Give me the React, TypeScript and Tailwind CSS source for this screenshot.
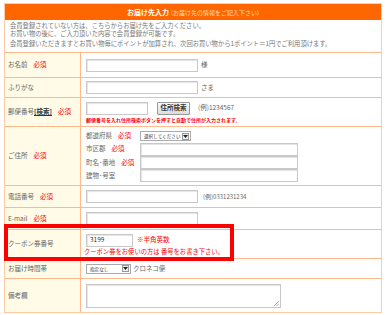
import React from 'react';

const font = { fontFamily: '"Noto Sans CJK JP", "Noto Sans", sans-serif' };

function Req() {
  return <span className="ml-[6px] text-[#ff0000]">必須</span>;
}

function Box({ w, value }: { w: string; value?: string }) {
  return (
    <div className={`${w} h-[13px] border border-[#c8c8c8] bg-white shadow-[inset_1px_1px_1px_#e4e4e4] flex items-center px-[3px] text-[6.5px] text-[#333]`}>
      {value}
    </div>
  );
}

function Select({ w, label }: { w: string; label: string }) {
  return (
    <div className={`${w} h-[10px] border border-[#aaa] bg-white flex items-center justify-between pl-[3px] pr-[1px] text-[4.6px] leading-[6px] text-[#333] whitespace-nowrap`}>
      <span>{label}</span>
      <span className="w-[7px] h-[7px] shrink-0 border border-[#999] bg-[#eee] flex items-center justify-center">
        <svg width="5" height="3" viewBox="0 0 5 3"><path d="M0 0h5L2.5 3z" fill="#222" /></svg>
      </span>
    </div>
  );
}

function Row({ h, label, children }: { h: string; label: React.ReactNode; children: React.ReactNode }) {
  return (
    <div className={`flex ${h} border-b border-[#ffb98a] last:border-b-0`}>
      <div className="w-[76px] shrink-0 bg-[#fffbe6] border-r border-[#ffb98a] flex items-center pl-[3px] text-[6.5px] text-[#666]">
        {label}
      </div>
      <div className="flex-1 pl-[5px] flex flex-col justify-center">{children}</div>
    </div>
  );
}

export default function App() {
  return (
    <div className="w-[387px] h-[315px] bg-white relative" style={font}>
      <div className="absolute left-[4px] top-[3px] w-[378px] border border-[#ffc9a3]">
        <div className="h-[16px] bg-[#ff6600] flex items-center justify-center text-white">
          <span className="text-[7px] font-bold">お届け先入力</span>
          <span className="ml-[2px] text-[6px] text-[#ffd9bf]">(お届け先の情報をご記入下さい)</span>
        </div>
        <div className="h-[33px] border-b border-[#ffb98a] px-[5px] pt-[2px] text-[6.3px] text-[#777] leading-[8px]">
          <p>会員登録されていない方は、こちらからお届け先をご入力ください。</p>
          <p>お買い物の後に、ご入力頂いた内容で会員登録が可能です。</p>
          <p className="mt-[2px]">会員登録いただきますとお買い物毎にポイントが加算され、次回お買い物から1ポイント＝1円でご利用頂けます。</p>
        </div>

        <Row h="h-[25px]" label={<>お名前<Req /></>}>
          <div className="flex items-center gap-[3px] text-[6.5px] text-[#666]">
            <Box w="w-[112px]" />様
          </div>
        </Row>

        <Row h="h-[20px]" label="ふりがな">
          <div className="flex items-center gap-[3px] text-[6.5px] text-[#666]">
            <Box w="w-[112px]" />さま
          </div>
        </Row>

        <Row
          h="h-[29px]"
          label={
            <>
              郵便番号<span className="font-bold text-[#333] underline">[検索]</span>
              <Req />
            </>
          }
        >
          <div className="flex items-center text-[6.5px] text-[#666]">
            <Box w="w-[62px]" />
            <div className="ml-[9px] w-[33px] h-[13px] border border-[#999] rounded-[1px] bg-gradient-to-b from-[#fafafa] to-[#dcdcdc] flex items-center justify-center text-[6.5px] font-bold text-[#333]">
              住所検索
            </div>
            <span className="ml-[8px]">(例)1234567</span>
          </div>
          <div className="mt-[2px] text-[5px] font-bold text-[#ff0000] leading-[6px]">
            郵便番号を入れ住所検索ボタンを押すと自動で住所が入力されます。
          </div>
        </Row>

        <Row h="h-[59px]" label={<>ご住所<Req /></>}>
          <div className="flex flex-col gap-[1.3px] text-[6.5px] text-[#666]">
            <div className="flex items-center h-[12px]">
              <span className="w-[54px]">都道府県<Req /></span>
              <Select w="w-[51px]" label="選択してください" />
            </div>
            <div className="flex items-center h-[12px]">
              <span className="w-[54px]">市区郡<Req /></span>
              <Box w="w-[158px]" />
            </div>
            <div className="flex items-center h-[12px]">
              <span className="w-[54px]">町名･番地<Req /></span>
              <Box w="w-[158px]" />
            </div>
            <div className="flex items-center h-[12px]">
              <span className="w-[54px]">建物･号室</span>
              <Box w="w-[158px]" />
            </div>
          </div>
        </Row>

        <Row h="h-[22px]" label={<>電話番号<Req /></>}>
          <div className="flex items-center gap-[5px] text-[6px] text-[#666]">
            <Box w="w-[112px]" />(例)0331231234
          </div>
        </Row>

        <Row h="h-[22px]" label={<>E-mail<Req /></>}>
          <Box w="w-[112px]" />
        </Row>

        <Row h="h-[29px]" label="クーポン券番号">
          <div className="flex items-center gap-[4px] text-[6.5px] text-[#ff0000]">
            <Box w="w-[47px]" value="3199" />※半角英数
          </div>
          <div className="mt-[1px] -ml-[2px] text-[6.3px] text-[#ff0000] leading-[7px]">
            クーポン券をお使いの方は 番号をお書き下さい。
          </div>
        </Row>

        <Row h="h-[20px]" label="お届け時間帯">
          <div className="flex items-center gap-[2px] text-[6.5px] text-[#666]">
            <Select w="w-[45px]" label="指定なし" />クロネコ便
          </div>
        </Row>

        <Row h="h-[33px]" label="備考欄">
          <div className="relative w-[195px] h-[24px] border border-[#c8c8c8] shadow-[inset_1px_1px_1px_#e4e4e4]">
            <svg className="absolute right-[1px] bottom-[1px]" width="5" height="5" viewBox="0 0 5 5">
              <path d="M5 0L0 5M5 2.5L2.5 5" stroke="#999" strokeWidth="0.8" />
            </svg>
          </div>
        </Row>
      </div>

      <div className="absolute left-[4px] top-[224px] w-[230px] h-[37px] border-4 border-[#ff0000]" />
    </div>
  );
}
